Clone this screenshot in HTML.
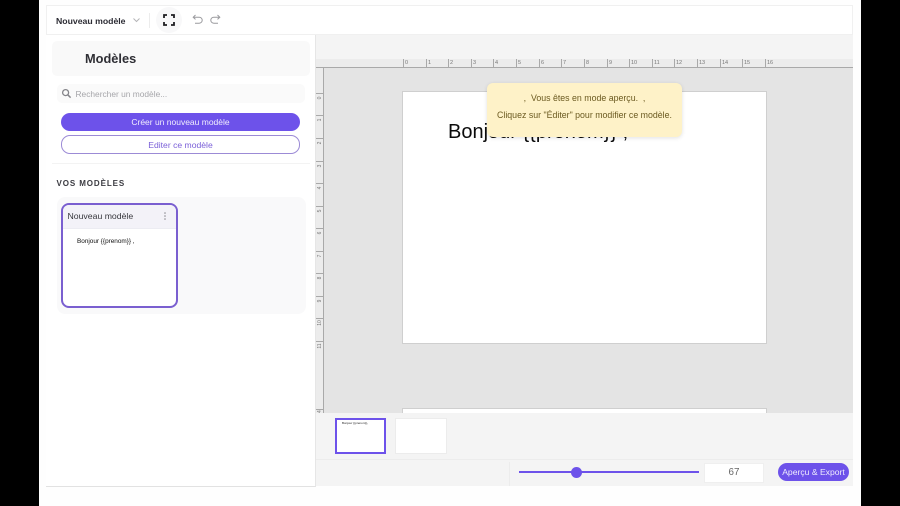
<!DOCTYPE html>
<html lang="fr"><head><meta charset="utf-8"><title>Modèles</title>
<style>
html,body{margin:0;padding:0;background:#000;}
body{width:900px;height:506px;overflow:hidden;position:relative;font-family:"Liberation Sans",sans-serif;}
#r{position:absolute;left:0;top:0;width:900px;height:506px;overflow:hidden;background:#000;filter:blur(.35px);}
#r div,#r svg,#r span.a{position:absolute;}
.t{white-space:nowrap;}
.hl{background:#a9a9a9;width:1px;height:8px;top:59px;}
.hn{top:60px;font-size:5.5px;color:#777;line-height:7px;}
.vl{background:#a9a9a9;height:1px;width:7px;left:316px;}
.vn{left:317px;font-size:5px;color:#777;line-height:6px;transform:rotate(-90deg);width:6px;text-align:center;}
</style></head><body><div id="r">
<div style="left:39px;top:0;width:822px;height:506px;background:#fefefe"></div>
<div style="left:46px;top:5px;width:805px;height:28px;background:#fff;border:1px solid #f0f0f0"></div>

<div class="t" style="left:56px;top:14.500px;font-size:8.700px;line-height:12px;font-weight:700;color:#2b2b33">Nouveau modèle</div>
<svg style="left:132px;top:17px" width="9" height="6" viewBox="0 0 9 6"><path d="M1.500 1.500 4.500 4.500 7.500 1.500" fill="none" stroke="#b5b5b8" stroke-width="1"/></svg>
<div style="left:149px;top:13px;width:1px;height:15px;background:#ececec"></div>
<div style="left:156px;top:7px;width:26px;height:26px;border-radius:13px;background:#f8f8f9"></div>
<svg style="left:163px;top:14px" width="12" height="12" viewBox="0 0 12 12"><path d="M1 4V1H4M8 1H11V4M11 8V11H8M4 11H1V8" fill="none" stroke="#1e1e22" stroke-width="1.800"/></svg>
<svg style="left:192px;top:14px" width="11" height="11" viewBox="0 0 11 11"><path d="M3.500 1 1.200 3.200 3.500 5.400M1.500 3.200H7.200A2.800 2.800 0 0 1 7.200 9.200H3" fill="none" stroke="#9a9a9e" stroke-width="1"/></svg>
<svg style="left:210px;top:14px" width="11" height="11" viewBox="0 0 11 11"><path d="M7.500 1 9.800 3.200 7.500 5.400M9.500 3.200H3.800A2.800 2.800 0 0 0 3.800 9.200H8" fill="none" stroke="#9a9a9e" stroke-width="1"/></svg>

<div style="left:46px;top:35px;width:269px;height:451px;background:#fff;border-right:1px solid #e6e6e6;border-bottom:1px solid #e2e2e2"></div>
<div style="left:52px;top:41px;width:258px;height:35px;background:#f9f9f9;border-radius:5px"></div>
<div class="t" style="left:85px;top:50.500px;font-size:12.800px;line-height:16px;font-weight:700;color:#2f2f35">Modèles</div>
<div style="left:57px;top:84px;width:248px;height:19px;background:#fafafa;border-radius:5px"></div>
<svg style="left:61px;top:88px" width="11" height="11" viewBox="0 0 11 11"><circle cx="4.600" cy="4.600" r="3" fill="none" stroke="#85858a" stroke-width="1.300"/><path d="M6.800 6.800 9.600 9.600" stroke="#85858a" stroke-width="1.500"/></svg>
<div class="t" style="left:75.500px;top:88px;font-size:8.400px;line-height:12px;color:#a6a6aa">Rechercher un modèle...</div>
<div class="t" style="left:61px;top:113px;width:239px;height:18px;border-radius:9px;background:#6d52ea;color:#f1eefd;font-size:8.500px;line-height:18px;text-align:center">Créer un nouveau modèle</div>
<div class="t" style="left:61px;top:135px;width:237px;height:17px;border-radius:9px;background:#fff;border:1px solid #9c8bd6;color:#7a5fd8;font-size:8.600px;line-height:18px;text-align:center">Editer ce modèle</div>
<div style="left:52px;top:163px;width:258px;height:1px;background:#f3f3f3"></div>
<div class="t" style="left:56.500px;top:178px;font-size:8px;line-height:11px;font-weight:700;color:#3a3a40;letter-spacing:.9px">VOS MODÈLES</div>
<div style="left:57px;top:197px;width:249px;height:117px;background:#f9f9fa;border-radius:8px"></div>
<div style="left:61px;top:203px;width:113px;height:101px;background:#fff;border:2px solid #7a5fd0;border-radius:8px;overflow:hidden">
<div style="left:0;top:0;width:113px;height:23px;background:#f3f2f8;border-bottom:1px solid #ececf2"></div>
<div class="t" style="left:4.500px;top:5px;font-size:8.700px;line-height:12px;color:#37373d">Nouveau modèle</div>
<svg style="left:99px;top:6px" width="6" height="10" viewBox="0 0 6 10"><circle cx="3" cy="2" r=".8" fill="#8a8a90"/><circle cx="3" cy="5" r=".8" fill="#8a8a90"/><circle cx="3" cy="8" r=".8" fill="#8a8a90"/></svg>
<div class="t" style="left:14px;top:32px;font-size:6.400px;line-height:9px;color:#0f0f0f">Bonjour {{prenom}} ,</div>
</div>

<div style="left:316px;top:35px;width:537px;height:24px;background:#f4f4f4"></div>
<div style="left:316px;top:59px;width:537px;height:8px;background:#ececec"></div>
<div style="left:316px;top:67px;width:537px;height:346px;background:#e4e4e4"></div>
<div style="left:316px;top:67px;width:7px;height:346px;background:#ececec"></div>
<div style="left:316px;top:67px;width:537px;height:1px;background:#a9a9a9"></div>
<div style="left:323px;top:67px;width:1px;height:346px;background:#a9a9a9"></div>

<div class="hl" style="left:403px"></div><div class="hn t" style="left:405px">0</div>
<div class="hl" style="left:426px"></div><div class="hn t" style="left:428px">1</div>
<div class="hl" style="left:448px"></div><div class="hn t" style="left:450px">2</div>
<div class="hl" style="left:471px"></div><div class="hn t" style="left:473px">3</div>
<div class="hl" style="left:493px"></div><div class="hn t" style="left:495px">4</div>
<div class="hl" style="left:516px"></div><div class="hn t" style="left:518px">5</div>
<div class="hl" style="left:539px"></div><div class="hn t" style="left:541px">6</div>
<div class="hl" style="left:561px"></div><div class="hn t" style="left:563px">7</div>
<div class="hl" style="left:584px"></div><div class="hn t" style="left:586px">8</div>
<div class="hl" style="left:607px"></div><div class="hn t" style="left:609px">9</div>
<div class="hl" style="left:629px"></div><div class="hn t" style="left:631px">10</div>
<div class="hl" style="left:652px"></div><div class="hn t" style="left:654px">11</div>
<div class="hl" style="left:674px"></div><div class="hn t" style="left:676px">12</div>
<div class="hl" style="left:697px"></div><div class="hn t" style="left:699px">13</div>
<div class="hl" style="left:720px"></div><div class="hn t" style="left:722px">14</div>
<div class="hl" style="left:742px"></div><div class="hn t" style="left:744px">15</div>
<div class="hl" style="left:765px"></div><div class="hn t" style="left:767px">16</div>

<div class="vl" style="top:93px"></div><div class="vn" style="top:95px">0</div>
<div class="vl" style="top:115px"></div><div class="vn" style="top:117px">1</div>
<div class="vl" style="top:138px"></div><div class="vn" style="top:140px">2</div>
<div class="vl" style="top:161px"></div><div class="vn" style="top:163px">3</div>
<div class="vl" style="top:183px"></div><div class="vn" style="top:185px">4</div>
<div class="vl" style="top:206px"></div><div class="vn" style="top:208px">5</div>
<div class="vl" style="top:228px"></div><div class="vn" style="top:230px">6</div>
<div class="vl" style="top:251px"></div><div class="vn" style="top:253px">7</div>
<div class="vl" style="top:273px"></div><div class="vn" style="top:275px">8</div>
<div class="vl" style="top:296px"></div><div class="vn" style="top:298px">9</div>
<div class="vl" style="top:318px"></div><div class="vn" style="top:320px">10</div>
<div class="vl" style="top:341px"></div><div class="vn" style="top:343px">11</div>
<div class="vl" style="top:409px"></div><div class="vn" style="top:410px">14</div>

<div style="left:403px;top:92px;width:363px;height:251px;background:#fff;box-shadow:0 0 0 1px #cfcfcf"></div>
<div style="left:403px;top:409px;width:363px;height:4px;background:#fff;box-shadow:0 0 0 1px #cfcfcf"></div>
<div class="t" style="left:448px;top:120px;font-size:20px;line-height:25px;color:#0c0c0c">Bonjour {{prenom}} ,</div>

<div style="left:487px;top:83px;width:195px;height:54px;background:#fef2c8;border-radius:6px;box-shadow:0 1px 4px rgba(0,0,0,.12)"></div>
<div class="t" style="left:487px;top:92px;width:195px;text-align:center;font-size:8.800px;line-height:12px;color:#6b5a20">,&nbsp; Vous êtes en mode aperçu. &nbsp;,</div>
<div class="t" style="left:487px;top:109px;width:195px;text-align:center;font-size:8.800px;line-height:12px;color:#6b5a20">Cliquez sur "Éditer" pour modifier ce modèle.</div>

<div style="left:316px;top:413px;width:537px;height:46px;background:#f4f4f4;border-bottom:1px solid #ececec"></div>
<div style="left:335px;top:418px;width:47px;height:32px;background:#fff;border:2px solid #6d52ea;overflow:hidden"><div class="t" style="left:5px;top:1px;font-size:3px;line-height:5px;color:#222">Bonjour {{prenom}},</div></div>
<div style="left:395px;top:418px;width:50px;height:34px;background:#fff;border:1px solid #ececec"></div>

<div style="left:316px;top:460px;width:537px;height:26px;background:#f4f4f4"></div>
<div style="left:509px;top:462px;width:1px;height:24px;background:#ececec"></div>
<div style="left:519px;top:471px;width:180px;height:2px;background:#6d52ea"></div>
<div style="left:570.500px;top:466.500px;width:11px;height:11px;border-radius:6px;background:#6d52ea"></div>
<div class="t" style="left:704px;top:463px;width:58px;height:18px;background:#fff;border:1px solid #efefef;color:#666;font-size:9.800px;line-height:18px;text-align:center">67</div>
<div class="t" style="left:778px;top:463px;width:71px;height:18px;border-radius:9px;background:#6d52ea;color:#efecfd;font-size:8.600px;line-height:19px;text-align:center">Aperçu &amp; Export</div>
</div></body></html>
